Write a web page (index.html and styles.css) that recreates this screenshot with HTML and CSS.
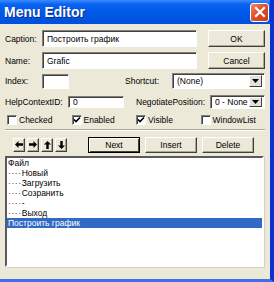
FILE: index.html
```html
<!DOCTYPE html>
<html>
<head>
  <title>Menu Editor</title>
  <link rel="stylesheet" href="styles.css">
</head>
<body>

  <div class="window">
    <div class="titlebar">
      <span class="title">Menu Editor</span>
      <span class="close">
        <svg width="12" height="12" viewBox="0 0 12 12"><path d="M2 2 L10 10 M10 2 L2 10" stroke="#fff" stroke-width="2.2" stroke-linecap="square"/></svg>
      </span>
    </div>

    <div class="content">
      <div class="row r1">
        <span class="lbl">Caption:</span>
        <div class="field caption">Построить график</div>
        <div class="btn okbtn">OK</div>
      </div>

      <div class="row r2">
        <span class="lbl">Name:</span>
        <div class="field caption">Grafic</div>
        <div class="btn okbtn">Cancel</div>
      </div>

      <div class="row r3">
        <span class="lbl">Index:</span>
        <div class="field index"></div>
        <span class="lbl2 shortcut">Shortcut:</span>
        <div class="field combo shortcutBox">
          <span class="comboText">(None)</span>
          <span class="drop"><svg width="7" height="4" viewBox="0 0 7 4"><path d="M0 0 H7 L3.5 4 Z" fill="#000"/></svg></span>
        </div>
      </div>

      <div class="row r4">
        <span class="lbl helpLbl">HelpContextID:</span>
        <div class="field help">0</div>
        <span class="lbl2 negLbl">NegotiatePosition:</span>
        <div class="field combo negBox">
          <span class="comboText">0 - None</span>
          <span class="drop"><svg width="7" height="4" viewBox="0 0 7 4"><path d="M0 0 H7 L3.5 4 Z" fill="#000"/></svg></span>
        </div>
      </div>

      <div class="row checks">
        <div class="check"><span class="box"></span>Checked</div>
        <div class="check"><span class="box"><svg width="8" height="8" viewBox="0 0 8 8"><path d="M1 3.5 L3 5.5 L7 1.5" stroke="#000" stroke-width="1.6" fill="none"/></svg></span>Enabled</div>
        <div class="check"><span class="box"><svg width="8" height="8" viewBox="0 0 8 8"><path d="M1 3.5 L3 5.5 L7 1.5" stroke="#000" stroke-width="1.6" fill="none"/></svg></span>Visible</div>
        <div class="check"><span class="box"></span>WindowList</div>
      </div>

      <div class="separator"></div>

      <div class="row tools">
        <div class="arrows">
          <div class="btn arrow"><svg width="8" height="7" viewBox="0 0 8 7"><path d="M0 3.5 L3.5 0 V2.3 H8 V4.7 H3.5 V7 Z" fill="#000"/></svg></div>
          <div class="btn arrow"><svg width="8" height="7" viewBox="0 0 8 7"><path d="M8 3.5 L4.5 0 V2.3 H0 V4.7 H4.5 V7 Z" fill="#000"/></svg></div>
          <div class="btn arrow"><svg width="7" height="8" viewBox="0 0 7 8"><path d="M3.5 0 L0 3.5 H2.3 V8 H4.7 V3.5 H7 Z" fill="#000"/></svg></div>
          <div class="btn arrow"><svg width="7" height="8" viewBox="0 0 7 8"><path d="M3.5 8 L0 4.5 H2.3 V0 H4.7 V4.5 H7 Z" fill="#000"/></svg></div>
        </div>
        <div class="btn wide default">Next</div>
        <div class="btn wide">Insert</div>
        <div class="btn wide">Delete</div>
      </div>

      <div class="list">
        <div class="item">Файл</div>
        <div class="item"><span class="dots">····</span>Новый</div>
        <div class="item"><span class="dots">····</span>Загрузить</div>
        <div class="item"><span class="dots">····</span>Созранить</div>
        <div class="item"><span class="dots">····</span>-</div>
        <div class="item"><span class="dots">····</span>Выход</div>
        <div class="item selected">Построить график</div>
      </div>
    </div>
  </div>

</body>
</html>
```

FILE: styles.css
```css
body {
  margin: 0;
  font-family: "Liberation Sans", Arial, sans-serif;
  font-size: 8.5px;
  color: #000;
}

.window {
  width: 274px;
  height: 282px;
  box-sizing: border-box;
  background: #ece9d8;
  border-right: 4px solid #0b31d0;
  border-bottom: 3px solid #3f6fe6;
  display: flex;
  flex-direction: column;
}

.titlebar {
  height: 24px;
  flex: none;
  display: flex;
  align-items: center;
  justify-content: space-between;
  padding: 0 0 0 4px;
  background: linear-gradient(#3a8cff 0%, #0a62f2 18%, #0058e6 55%, #0050dc 100%);
}

.title {
  color: #fff;
  font-weight: bold;
  font-size: 14px;
  text-shadow: 1px 1px #0a2a8a;
}

.close {
  width: 17px;
  height: 17px;
  margin-right: 1px;
  border: 1px solid #fff;
  border-radius: 3px;
  background: linear-gradient(135deg, #f08a6a 0%, #e0502c 45%, #c83a18 100%);
  display: flex;
  align-items: center;
  justify-content: center;
}

.content {
  flex: 1;
  padding: 6px 5px 0 5px;
}

.row {
  display: flex;
  align-items: center;
}

.lbl {
  width: 37px;
  flex: none;
}

.field {
  background: #fff;
  box-sizing: border-box;
  border: 1px solid;
  border-color: #808080 #fff #fff #808080;
  box-shadow: inset 1px 1px #404040;
  padding-left: 4px;
  display: flex;
  align-items: center;
  flex: none;
}

.btn {
  box-sizing: border-box;
  background: #ece9d8;
  border: 1px solid;
  border-color: #fff #404040 #404040 #fff;
  box-shadow: inset -1px -1px #aca899;
  display: flex;
  align-items: center;
  justify-content: center;
  flex: none;
}

.r1, .r2 {
  height: 17px;
}

.r2 {
  margin-top: 5px;
}

.caption {
  width: 155px;
  height: 17px;
}

.okbtn {
  width: 57px;
  height: 17px;
  margin-left: auto;
}

.r3 {
  margin-top: 4px;
  height: 16px;
}

.index {
  width: 27px;
  height: 15px;
}

.shortcut {
  margin-left: 56px;
}

.combo {
  height: 16px;
  padding-right: 2px;
}

.comboText {
  flex: 1;
}

.drop {
  width: 13px;
  height: 12px;
  box-sizing: border-box;
  background: #e4e1d6;
  border: 1px solid;
  border-color: #fff #404040 #404040 #fff;
  display: flex;
  align-items: center;
  justify-content: center;
}

.shortcutBox {
  width: 93px;
  margin-left: auto;
}

.r4 {
  margin-top: 6px;
  height: 14px;
}

.helpLbl {
  width: 63px;
}

.help {
  width: 56px;
  height: 12px;
}

.negLbl {
  margin-left: 12px;
}

.negBox {
  width: 55px;
  height: 14px;
  margin-left: auto;
}

.negBox .drop {
  height: 10px;
}

.checks {
  margin-top: 5px;
  height: 11px;
  padding-left: 2px;
}

.check {
  width: 65px;
  display: flex;
  align-items: center;
}

.box {
  width: 10px;
  height: 10px;
  box-sizing: border-box;
  background: #fff;
  border: 1px solid;
  border-color: #808080 #fff #fff #808080;
  box-shadow: inset 1px 1px #404040;
  margin-right: 2px;
  display: flex;
  align-items: center;
  justify-content: center;
}

.separator {
  margin-top: 4px;
  border-top: 1px solid #aca899;
  border-bottom: 1px solid #fff;
}

.tools {
  margin-top: 5px;
  height: 17px;
}

.arrows {
  display: flex;
  gap: 2px;
  margin-left: 8px;
}

.arrow {
  width: 12px;
  height: 14px;
}

.wide {
  width: 52px;
  height: 16px;
  margin-left: 5px;
}

.default {
  margin-left: 21px;
  border-color: #000;
  box-shadow: inset 1px 1px #fff, inset -1px -1px #404040;
}

.list {
  margin-top: 3px;
  width: 259px;
  height: 111px;
  box-sizing: border-box;
  background: #fff;
  border: 2px solid;
  border-color: #5a5a5a #fff #fff #5a5a5a;
  box-shadow: 1px 1px #d4d0c8;
}

.item {
  height: 10px;
  line-height: 10px;
  padding-left: 1px;
  white-space: nowrap;
}

.dots {
  letter-spacing: 0.6px;
  color: #333;
}

.selected {
  background: #316ac5;
  color: #fff;
}
```
